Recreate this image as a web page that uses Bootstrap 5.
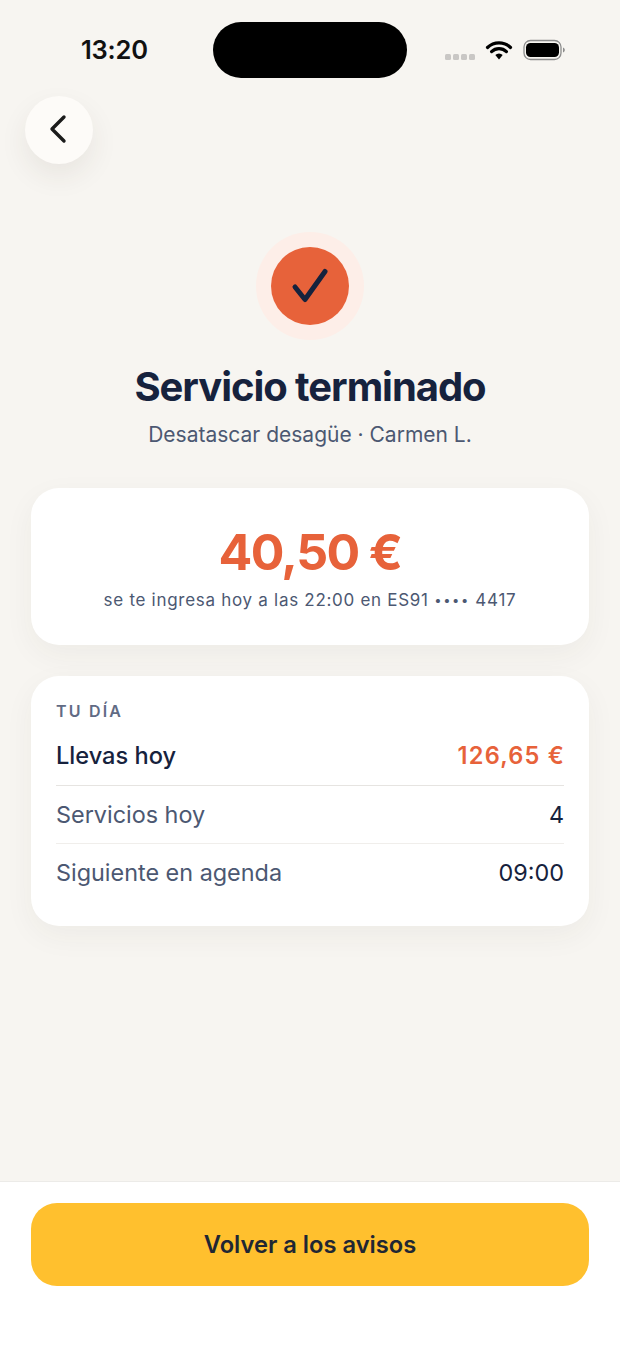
<!DOCTYPE html>
<html lang="es">
<head>
<meta charset="utf-8">
<title>Servicio terminado</title>
<link href="https://cdn.jsdelivr.net/npm/bootstrap@5.3.0/dist/css/bootstrap.min.css" rel="stylesheet">
<style>
html,body{height:100%;margin:0}
body{background:#f7f5f1;font-family:Inter,"Liberation Sans",sans-serif;color:#16223d}
.screen{width:620px;height:1348px;overflow:hidden}
.status-row{height:100px;padding:22px 55px 0 81px;flex:none;margin-bottom:-4px}
.clock{font-size:25.5px;font-weight:600;color:#111;width:132px;line-height:56px;letter-spacing:-.2px}
.island{width:194px;height:56px;border-radius:28px;background:#000}
.status-icons{margin-left:38px;height:56px;gap:0}
.sig-dots{gap:2px;margin-right:10px;margin-top:14px}
.sig-dots i{display:block;width:6px;height:6px;border-radius:1.5px;background:#c9c7c5}
.status-batt{margin-left:8px}
.back-btn{width:68px;height:68px;margin-left:25px;background:#fdfbf8;box-shadow:0 12px 28px rgba(60,50,40,.08);border:0;padding:0}
.hero{margin-top:83px}
.tick{width:78px;height:78px;background:#e7623a;box-shadow:0 0 0 15px #fdeee8}
.hero-title{font-size:40px;font-weight:700;letter-spacing:-1.05px;line-height:46px;margin:39px 0 0;color:#16223d}
.hero-sub{font-size:21px;line-height:28px;color:#4c5872;margin-top:11px}
.sheet{margin:39px 31px 0;background:#fff;border:0;border-radius:28px;box-shadow:0 10px 30px rgba(60,50,40,.05)}
.pay-card{height:157px;padding-top:30px}
.amount{font-size:50px;font-weight:700;line-height:68px;color:#e7623a;letter-spacing:-1.6px}
.pay-note{font-size:17px;line-height:24px;color:#4c5872;margin-top:2px;letter-spacing:.71px}
.pay-note span{font-size:13px;letter-spacing:1.6px;vertical-align:1px}
.day-card{margin-top:31px;height:250px;padding:24px 25px 0}
.day-label{font-size:16px;font-weight:600;letter-spacing:2.2px;line-height:22px;color:#616b84}
.day-row{font-size:23.4px;height:58px;color:#4c5872;border-bottom:1px solid #f0eeeb}
.day-row.first-row{height:64px;padding-top:5px;border-bottom-color:#e6e4e1;font-size:23.6px}
.day-row:last-child{border-bottom:0}
.day-row b{font-weight:400;color:#16223d}
.day-row .lead-name{font-weight:500;color:#16223d}
.day-row .lead-val{font-weight:600;color:#e7623a;letter-spacing:1.2px;margin-right:-1px}
.bottom-bar{background:#fff;border-top:1px solid #ecebe8;height:167px;padding:21px 31px 0;flex:none}
.cta{height:83px;background:#ffc02e;border:0;border-radius:26px;font-size:23.7px;font-weight:600;color:#1f2733;line-height:1}
.cta:hover,.cta:active{background:#ffc02e;color:#1f2733}
</style>
</head>
<body>
<div class="screen d-flex flex-column">
  <div class="status-row d-flex align-items-start">
    <div class="clock">13:20</div>
    <div class="island"></div>
    <div class="status-icons d-flex align-items-center">
      <div class="sig-dots d-flex"><i></i><i></i><i></i><i></i></div>
      <svg width="28" height="22" viewBox="0 0 28 22" aria-hidden="true"><path d="M2.500 8.500a16.500 16.500 0 0 1 23 0M6.600 12.600a10.600 10.600 0 0 1 14.800 0" fill="none" stroke="#000" stroke-width="3.200" stroke-linecap="round"/><path d="M10.300 15.900a5.300 5.300 0 0 1 7.400 0L14 20.600z" fill="#000"/></svg>
      <svg class="status-batt" width="44" height="22" viewBox="0 0 44 22" aria-hidden="true"><rect x="3" y="1.500" width="37" height="19" rx="6.500" fill="none" stroke="#8d8d8d" stroke-width="1.300"/><rect x="5" y="4" width="33" height="14" rx="4.500" fill="#000"/><path d="M42 8.500c1.200.4 1.800 1.300 1.800 2.500s-.6 2.100-1.800 2.500z" fill="#8d8d8d"/></svg>
    </div>
  </div>

  <button type="button" class="back-btn btn rounded-circle d-flex align-items-center justify-content-center flex-none" aria-label="Volver">
    <svg width="20" height="32" viewBox="0 0 20 32" aria-hidden="true"><path d="M16 4 4 16 16 28" transform="translate(-1 -1)" fill="none" stroke="#1b1b1b" stroke-width="3.400" stroke-linecap="round" stroke-linejoin="round"/></svg>
  </button>

  <div class="hero d-flex flex-column align-items-center text-center">
    <div class="tick rounded-circle d-flex align-items-center justify-content-center">
      <svg width="40" height="40" viewBox="0 0 40 40" aria-hidden="true"><path d="M5 21 15 33.500 35 5.500" fill="none" stroke="#16223d" stroke-width="5" stroke-linecap="round" stroke-linejoin="round"/></svg>
    </div>
    <h1 class="hero-title">Servicio terminado</h1>
    <div class="hero-sub">Desatascar desagüe · Carmen L.</div>
  </div>

  <div class="sheet pay-card card text-center">
    <div class="amount">40,50 €</div>
    <div class="pay-note">se te ingresa hoy a las 22:00 en ES91 <span>••••</span> 4417</div>
  </div>

  <div class="sheet day-card card">
    <div class="day-label">TU DÍA</div>
    <div class="day-row first-row d-flex justify-content-between align-items-center"><span class="lead-name">Llevas hoy</span><span class="lead-val">126,65 €</span></div>
    <div class="day-row d-flex justify-content-between align-items-center"><span>Servicios hoy</span><b>4</b></div>
    <div class="day-row d-flex justify-content-between align-items-center"><span>Siguiente en agenda</span><b>09:00</b></div>
  </div>

  <div class="bottom-bar mt-auto">
    <button type="button" class="cta btn w-100">Volver a los avisos</button>
  </div>
</div>
<script src="https://cdn.jsdelivr.net/npm/bootstrap@5.3.0/dist/js/bootstrap.bundle.min.js"></script>
</body>
</html>
